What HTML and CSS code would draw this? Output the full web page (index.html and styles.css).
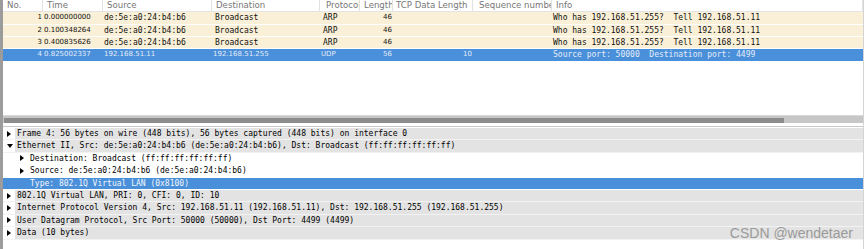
FILE: index.html
```html
<!DOCTYPE html>
<html lang="en">
<head>
    <meta charset="UTF-8">
    <meta name="viewport" content="width=device-width, initial-scale=1.0">
    <title>Capture</title>
    <link rel="stylesheet" href="styles.css">
</head>
<body>
    <div class="window">
        <div class="packet-list">
            <div class="row head">
                <div class="cell">No.</div>
                <div class="cell">Time</div>
                <div class="cell">Source</div>
                <div class="cell">Destination</div>
                <div class="cell">Protocol</div>
                <div class="cell">Length</div>
                <div class="cell">TCP Data Length</div>
                <div class="cell">Sequence number</div>
                <div class="cell">Info</div>
            </div>
            <div class="row arp">
                <div class="cell num right">1</div>
                <div class="cell num">0.000000000</div>
                <div class="cell mono">de:5e:a0:24:b4:b6</div>
                <div class="cell mono">Broadcast</div>
                <div class="cell mono">ARP</div>
                <div class="cell num right">46</div>
                <div class="cell"></div>
                <div class="cell"></div>
                <div class="cell mono">Who has 192.168.51.255?  Tell 192.168.51.11</div>
            </div>
            <div class="row arp">
                <div class="cell num right">2</div>
                <div class="cell num">0.100348264</div>
                <div class="cell mono">de:5e:a0:24:b4:b6</div>
                <div class="cell mono">Broadcast</div>
                <div class="cell mono">ARP</div>
                <div class="cell num right">46</div>
                <div class="cell"></div>
                <div class="cell"></div>
                <div class="cell mono">Who has 192.168.51.255?  Tell 192.168.51.11</div>
            </div>
            <div class="row arp">
                <div class="cell num right">3</div>
                <div class="cell num">0.400835626</div>
                <div class="cell mono">de:5e:a0:24:b4:b6</div>
                <div class="cell mono">Broadcast</div>
                <div class="cell mono">ARP</div>
                <div class="cell num right">46</div>
                <div class="cell"></div>
                <div class="cell"></div>
                <div class="cell mono">Who has 192.168.51.255?  Tell 192.168.51.11</div>
            </div>
            <div class="row selected">
                <div class="cell num right">4</div>
                <div class="cell num">0.825002337</div>
                <div class="cell num">192.168.51.11</div>
                <div class="cell num">192.168.51.255</div>
                <div class="cell num">UDP</div>
                <div class="cell num right">56</div>
                <div class="cell num right">10</div>
                <div class="cell"></div>
                <div class="cell mono">Source port: 50000  Destination port: 4499</div>
            </div>
        </div>

        <div class="hscroll"><div class="thumb"></div></div>

        <div class="details">
            <div class="node top">
                <span class="arrow"><svg width="4" height="6" viewBox="0 0 4 6"><path d="M0 0L4 3L0 6z"/></svg></span>
                <span class="label">Frame 4: 56 bytes on wire (448 bits), 56 bytes captured (448 bits) on interface 0</span>
            </div>
            <div class="node top">
                <span class="arrow"><svg width="6" height="4" viewBox="0 0 6 4"><path d="M0 0L6 0L3 4z"/></svg></span>
                <span class="label">Ethernet II, Src: de:5e:a0:24:b4:b6 (de:5e:a0:24:b4:b6), Dst: Broadcast (ff:ff:ff:ff:ff:ff)</span>
            </div>
            <div class="node child">
                <span class="arrow"><svg width="4" height="6" viewBox="0 0 4 6"><path d="M0 0L4 3L0 6z"/></svg></span>
                <span class="label">Destination: Broadcast (ff:ff:ff:ff:ff:ff)</span>
            </div>
            <div class="node child">
                <span class="arrow"><svg width="4" height="6" viewBox="0 0 4 6"><path d="M0 0L4 3L0 6z"/></svg></span>
                <span class="label">Source: de:5e:a0:24:b4:b6 (de:5e:a0:24:b4:b6)</span>
            </div>
            <div class="node child selected">
                <span class="arrow"></span>
                <span class="label">Type: 802.1Q Virtual LAN (0x8100)</span>
            </div>
            <div class="node top">
                <span class="arrow"><svg width="4" height="6" viewBox="0 0 4 6"><path d="M0 0L4 3L0 6z"/></svg></span>
                <span class="label">802.1Q Virtual LAN, PRI: 0, CFI: 0, ID: 10</span>
            </div>
            <div class="node top">
                <span class="arrow"><svg width="4" height="6" viewBox="0 0 4 6"><path d="M0 0L4 3L0 6z"/></svg></span>
                <span class="label">Internet Protocol Version 4, Src: 192.168.51.11 (192.168.51.11), Dst: 192.168.51.255 (192.168.51.255)</span>
            </div>
            <div class="node top">
                <span class="arrow"><svg width="4" height="6" viewBox="0 0 4 6"><path d="M0 0L4 3L0 6z"/></svg></span>
                <span class="label">User Datagram Protocol, Src Port: 50000 (50000), Dst Port: 4499 (4499)</span>
            </div>
            <div class="node top">
                <span class="arrow"><svg width="4" height="6" viewBox="0 0 4 6"><path d="M0 0L4 3L0 6z"/></svg></span>
                <span class="label">Data (10 bytes)</span>
            </div>
            <div class="watermark">CSDN @wendetaer</div>
        </div>
    </div>
</body>
</html>
```

FILE: styles.css
```css
body {
    margin: 0;
    width: 865px;
    height: 249px;
    overflow: hidden;
    background-color: #fff;
    font-family: 'DejaVu Sans', sans-serif;
    color: #111;
}
.window {
    width: 860px;
    height: 249px;
    border-left: 3px solid #9c9c9c;
    border-right: 1px solid #d4d4d4;
    display: flex;
    flex-direction: column;
}
.packet-list {
    height: 114px;
    flex-shrink: 0;
}
.row {
    display: grid;
    grid-template-columns: 40px 60px 109px 108px 40px 33px 80px 79px 1fr;
    height: 11.4px;
    border-bottom: 1px solid #fff;
    line-height: 11.4px;
}
.cell {
    white-space: pre;
    overflow: hidden;
    padding-left: 1px;
}
.head {
    height: 11.3px;
    border-bottom: 1px solid #e4e4e4;
    color: #777;
    font-size: 8.6px;
}
.head .cell {
    padding-left: 4px;
    border-right: 1px solid #e2e2e2;
}
.head .cell:nth-child(5),
.head .cell:nth-child(8) {
    padding-left: 6px;
}
.head .cell:nth-child(7) {
    padding-left: 3px;
}
.mono {
    font-family: 'DejaVu Sans Mono', monospace;
    font-size: 8px;
}
.num {
    font-size: 7px;
}
.right {
    text-align: right;
    padding-right: 1px;
}
.arp {
    background-color: #faf0d7;
}
.arp .cell:nth-child(4),
.arp .cell:nth-child(5) {
    padding-left: 3px;
}
.row.selected {
    background-color: #4a8fd9;
    color: #e4edf8;
}
.hscroll {
    height: 8px;
    margin-top: 1px;
    background-color: #c6c6c6;
    border-top: 1px solid #d8d8d8;
    padding: 2px 0 0 1px;
    box-sizing: border-box;
}
.thumb {
    width: 780px;
    height: 5px;
    background-color: #8c8c8c;
}
.details {
    position: relative;
    margin-top: 3px;
    border-top: 1px solid #c8c8c8;
    padding-top: 1px;
    font-family: 'DejaVu Sans Mono', monospace;
    font-size: 8px;
    color: #000;
}
.node {
    display: flex;
    height: 11.4px;
    line-height: 11.4px;
    border-bottom: 1px solid #f2f2f2;
    white-space: pre;
}
.arrow {
    width: 12px;
    flex-shrink: 0;
    display: flex;
    align-items: center;
    padding-left: 4px;
    box-sizing: border-box;
}
.top .label {
    flex: 1;
    background-color: #e3e3e3;
    padding-left: 2px;
}
.child {
    padding-left: 13px;
    border-bottom-color: #fff;
}
.child .label {
    padding-left: 2px;
}
.node.selected {
    background-color: #4a8fd9;
    color: #f2f6fc;
}
.watermark {
    position: absolute;
    right: 10px;
    bottom: 0;
    font-family: 'Liberation Sans', sans-serif;
    font-size: 14px;
    line-height: 14px;
    color: #9a9a9a;
}
```
